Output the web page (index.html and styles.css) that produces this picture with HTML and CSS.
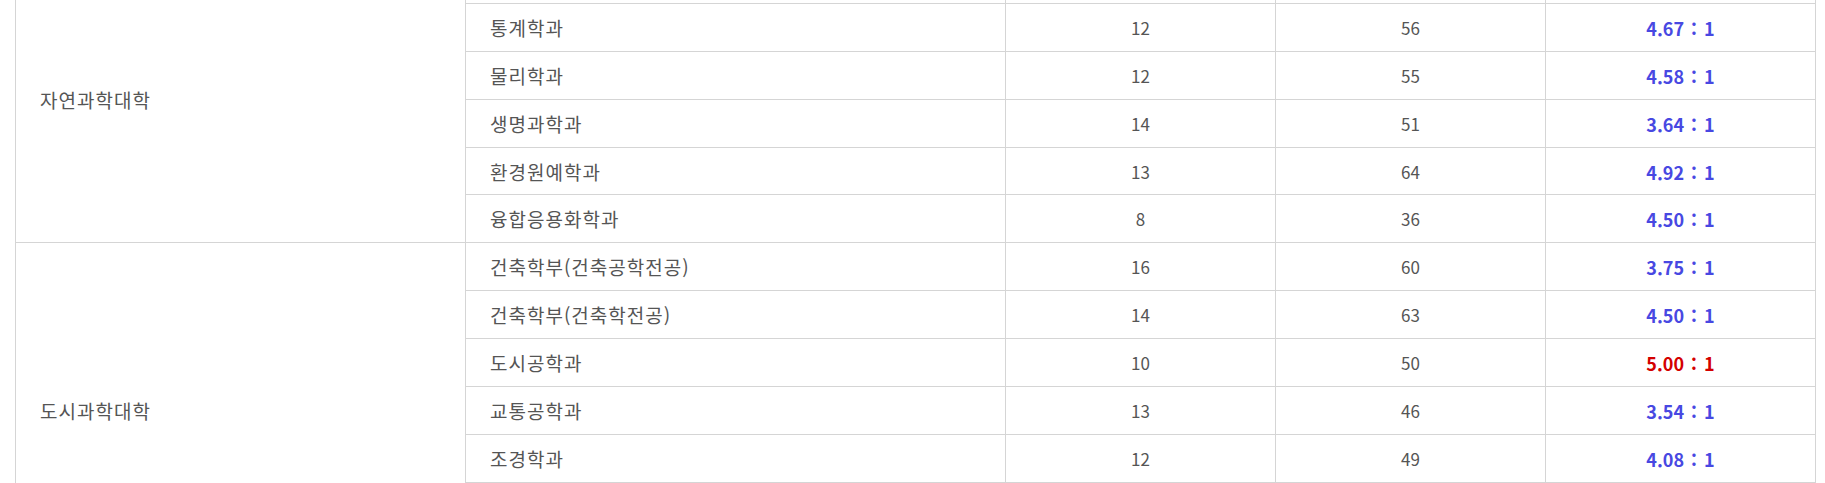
FILE: index.html
```html
<!DOCTYPE html>
<html lang="ko">
<head>
<meta charset="utf-8">
<title>경쟁률</title>
<link rel="stylesheet" href="styles.css">
</head>
<body>
<div class="page">
  <table class="rate-table">
    <colgroup>
      <col class="c-college">
      <col class="c-dept">
      <col class="c-num">
      <col class="c-num">
      <col class="c-num">
    </colgroup>
    <tbody>
      <tr>
        <td class="college" rowspan="6">자연과학대학</td>
        <td class="dept">수학과</td><td class="num">12</td><td class="num">52</td><td class="ratio">4.33 : 1</td>
      </tr>
      <tr><td class="dept">통계학과</td><td class="num">12</td><td class="num">56</td><td class="ratio">4.67 : 1</td></tr>
      <tr><td class="dept">물리학과</td><td class="num">12</td><td class="num">55</td><td class="ratio">4.58 : 1</td></tr>
      <tr><td class="dept">생명과학과</td><td class="num">14</td><td class="num">51</td><td class="ratio">3.64 : 1</td></tr>
      <tr><td class="dept">환경원예학과</td><td class="num">13</td><td class="num">64</td><td class="ratio">4.92 : 1</td></tr>
      <tr><td class="dept">융합응용화학과</td><td class="num">8</td><td class="num">36</td><td class="ratio">4.50 : 1</td></tr>
      <tr>
        <td class="college" rowspan="7">도시과학대학</td>
        <td class="dept">건축학부(건축공학전공)</td><td class="num">16</td><td class="num">60</td><td class="ratio">3.75 : 1</td>
      </tr>
      <tr><td class="dept">건축학부(건축학전공)</td><td class="num">14</td><td class="num">63</td><td class="ratio">4.50 : 1</td></tr>
      <tr><td class="dept">도시공학과</td><td class="num">10</td><td class="num">50</td><td class="ratio top">5.00 : 1</td></tr>
      <tr><td class="dept">교통공학과</td><td class="num">13</td><td class="num">46</td><td class="ratio">3.54 : 1</td></tr>
      <tr><td class="dept">조경학과</td><td class="num">12</td><td class="num">49</td><td class="ratio">4.08 : 1</td></tr>
      <tr><td class="dept">환경공학부</td><td class="num">15</td><td class="num">58</td><td class="ratio">3.87 : 1</td></tr>
      <tr><td class="dept">공간정보공학과</td><td class="num">11</td><td class="num">41</td><td class="ratio">3.73 : 1</td></tr>
    </tbody>
  </table>
</div>
</body>
</html>
```

FILE: styles.css
```css
html, body {
  margin: 0;
  padding: 0;
  background: #ffffff;
}

body {
  font-family: "Noto Sans CJK KR", "Noto Sans", sans-serif;
  color: #555555;
  overflow: hidden;
}

.page {
  padding-left: 15px;
  margin-top: -45px;
}

.rate-table {
  border-collapse: collapse;
  table-layout: fixed;
  width: 1801px;
  font-size: 17px;
}

.c-college { width: 450px; }
.c-dept { width: 540px; }
.c-num { width: 270px; }

.rate-table td {
  border: 1px solid #d5d5d5;
  height: 47.9px;
  padding: 1px 24px 0;
  box-sizing: border-box;
  vertical-align: middle;
  line-height: 24px;
}

.rate-table td.college,
.rate-table td.dept {
  text-align: left;
  font-size: 19px;
  letter-spacing: 1px;
}

.rate-table td.num,
.rate-table td.ratio {
  text-align: center;
}

.rate-table td.ratio {
  color: #4848e2;
  font-weight: 700;
  font-size: 18px;
  word-spacing: 2px;
}

.rate-table td.ratio.top {
  color: #d40000;
}
```
